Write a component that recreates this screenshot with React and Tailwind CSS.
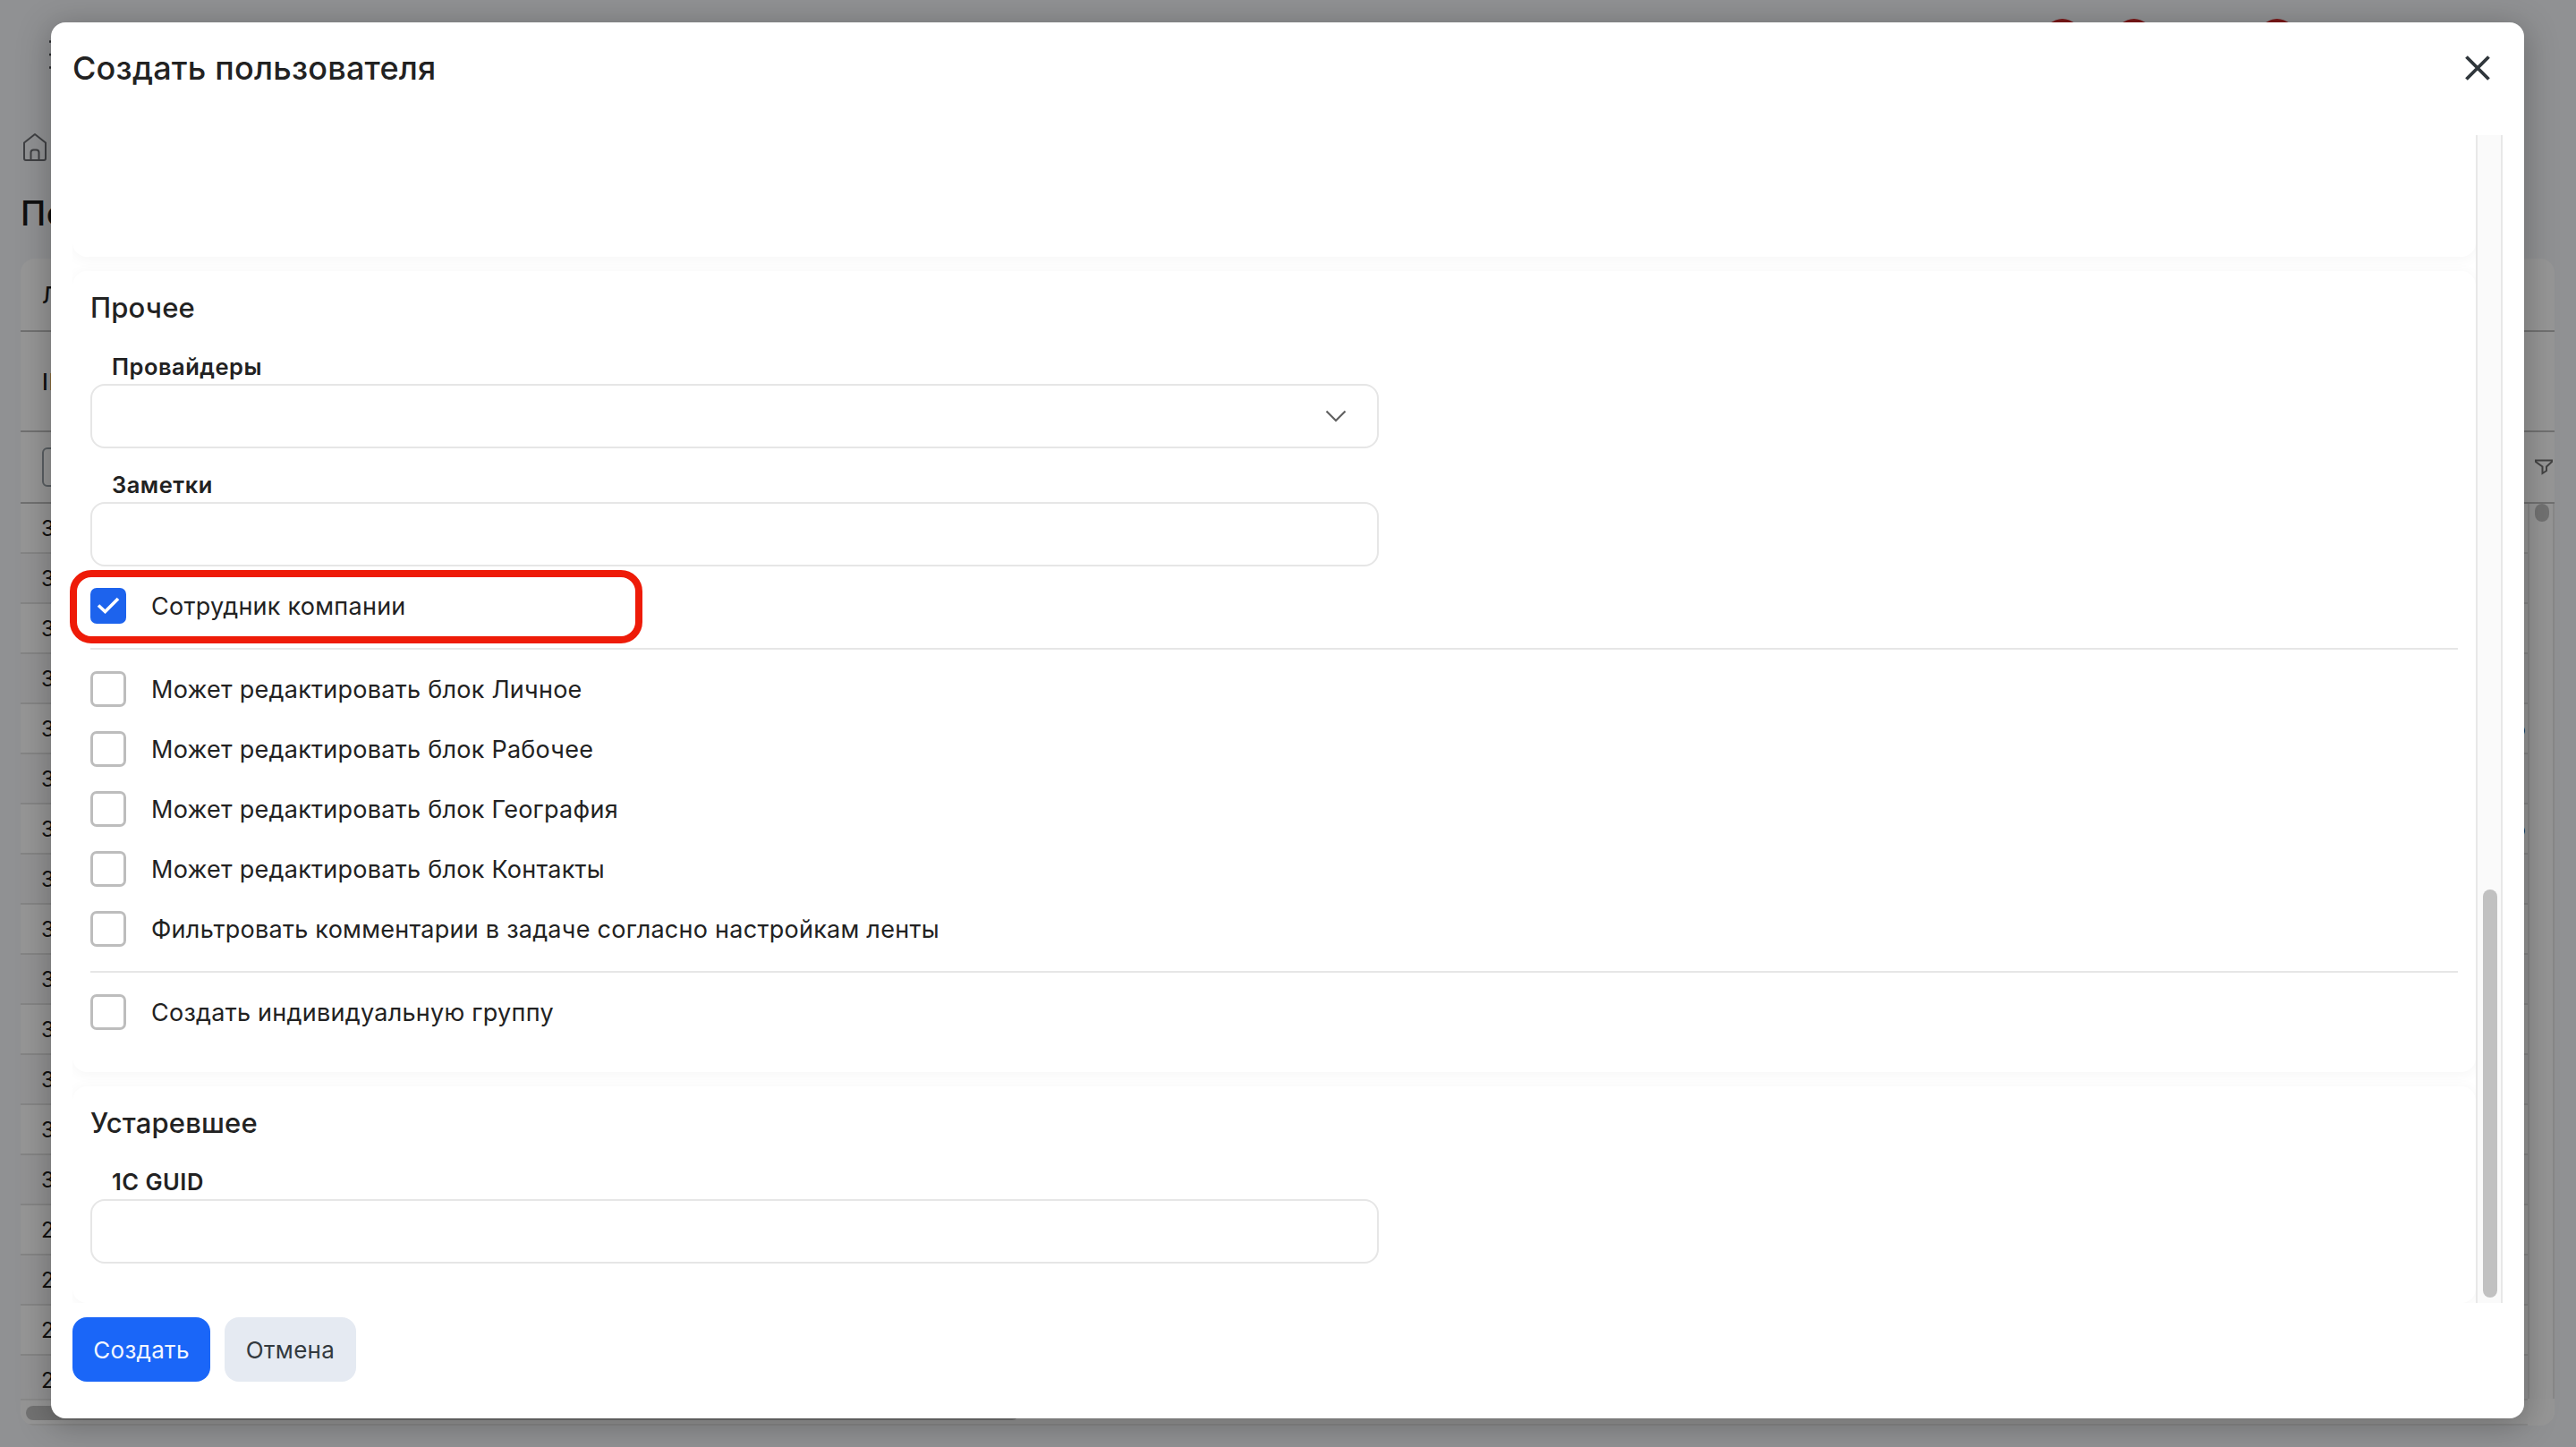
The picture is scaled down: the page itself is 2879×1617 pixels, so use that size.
import React, { useState } from "react";

const TABLE_ROWS = [
  { id: "3" },
  { id: "3" },
  { id: "3" },
  { id: "3" },
  { id: "3", tail: "о" },
  { id: "3" },
  { id: "3", tail: "о" },
  { id: "3" },
  { id: "3" },
  { id: "3" },
  { id: "3" },
  { id: "3" },
  { id: "3" },
  { id: "3" },
  { id: "2" },
  { id: "2" },
  { id: "2" },
  { id: "2" },
];

const PERMISSIONS = [
  { name: "edit_personal", label: "Может редактировать блок Личное" },
  { name: "edit_work", label: "Может редактировать блок Рабочее" },
  { name: "edit_geo", label: "Может редактировать блок География" },
  { name: "edit_contacts", label: "Может редактировать блок Контакты" },
  { name: "filter_comments", label: "Фильтровать комментарии в задаче согласно настройкам ленты" },
];

function UsersPage() {
  return (
    <div className="h-full w-full bg-[#f0f2f5] text-[#1c1c1c]">
      <header className="relative flex h-[121px] items-center pl-[54px]">
        <svg width="36" height="32" viewBox="0 0 36 32" fill="none" stroke="#4a4d52" strokeWidth="2.5">
          <path d="M1 1.5h34M1 16h34M1 30.5h34" />
        </svg>
        {/* notification counters */}
        <span className="absolute left-[2285px] top-[21px] size-10 rounded-full bg-[#cf2929]" />
        <span className="absolute left-[2365px] top-[21px] size-10 rounded-full bg-[#cf2929]" />
        <span className="absolute left-[2525px] top-[21px] size-10 rounded-full bg-[#cf2929]" />
      </header>

      <nav className="pl-[25px] pt-[27px]">
        <svg width="28" height="32" viewBox="0 0 28 32" fill="none" stroke="#6a6b70" strokeWidth="2" strokeLinejoin="round">
          <path d="M2 11.5L14 2l12 9.500V29a2 2 0 0 1-2 2H4a2 2 0 0 1-2-2z" />
          <path d="M9.500 31V22.500a3 3 0 0 1 3-3h3a3 3 0 0 1 3 3V31" />
        </svg>
      </nav>

      <h1 className="mt-9 pl-[23px] text-[38px] font-medium leading-[44px] tracking-[0.5px]">По</h1>

      <div className="ml-[23px] mr-6 mt-[29px] h-[1304px] overflow-hidden rounded-2xl bg-[#fafafa]">
        <div className="flex h-[82px] items-center border-b-2 border-[#bdbdbd] pl-6 pt-1 text-[25px] font-medium">Л</div>
        <div className="flex h-28 items-center border-b-2 border-[#bdbdbd] pl-6 pt-1 text-[25px] font-medium tracking-[1px]">ID</div>
        <div className="flex h-20 items-center justify-between border-b-2 border-[#bdbdbd] pl-6 pr-0.5">
          <div className="h-11 w-40 rounded-md border-2 border-[#949da3]" />
          <svg width="20" height="18" viewBox="0 0 20 18" fill="none" stroke="#707070" strokeWidth="2">
            <path d="M1 1.500h18v1.500l-6 5.500v4.500L8.500 16V8.500L1 3z" />
          </svg>
        </div>

        <div className="flex h-[1000px]">
          <div className="flex-1 overflow-hidden">
            {TABLE_ROWS.map((row, i) => (
              <div
                key={i}
                className="flex h-14 items-center justify-between border-b-2 border-[#dedede] pl-[23px] pr-0.5 pt-0.5 text-2xl odd:bg-[#fafafa] even:bg-[#f3f4f6]"
              >
                <span>{row.id}</span>
                <span>{row.tail}</span>
              </div>
            ))}
          </div>
          <div className="w-[30px] border-x-2 border-[#e3e3e3] bg-[#f8f8f8] pl-1.5">
            <div className="h-5 w-4 rounded-full bg-[#bfbfbf]" />
          </div>
        </div>

        <div className="flex h-[30px]">
          <div className="flex-1 border-y-2 border-[#e5e5e5] bg-[#f8f8f8] pl-1.5 pt-1.5">
            <div className="h-4 w-[1110px] rounded-full bg-[#bfbfbf]" />
          </div>
          <div className="w-[30px] bg-[#fbfbfb]" />
        </div>
      </div>
    </div>
  );
}

function Card({ className, children }) {
  return (
    <section className={`shrink-0 rounded-2xl bg-white px-5 shadow-[0_2px_16px_rgba(0,0,0,0.045)] ${className}`}>
      {children}
    </section>
  );
}

function SectionTitle({ children }) {
  return <h3 className="pt-5 text-[31px] font-medium leading-[42px] tracking-[0.18px]">{children}</h3>;
}

function Field({ label, className, children }) {
  return (
    <div className={className}>
      <div className="mb-1.5 pl-6 text-[25.5px] font-semibold leading-[26px] tracking-[0.5px]">{label}</div>
      <div className="flex h-[72px] w-[1440px] items-center justify-end rounded-2xl border-2 border-[#e6e6e6] bg-white pr-[34px]">
        {children}
      </div>
    </div>
  );
}

function CheckRow({ label, checked, onChange }) {
  return (
    <label className="flex h-10 items-center gap-[27px]">
      <input type="checkbox" className="sr-only" checked={checked} onChange={onChange} />
      {checked ? (
        <span className="flex size-10 items-center justify-center rounded-[7px] bg-[#1d63ed]">
          <svg width="26" height="20" viewBox="0 0 26 20" fill="none" stroke="#fff" strokeWidth="3.600">
            <path d="M2 9.500l7.500 7L24 2" />
          </svg>
        </span>
      ) : (
        <span className="size-10 rounded-[7px] border-3 border-[#bdbdbd] bg-white" />
      )}
      <span className="pl-px pt-0.5 text-[27px] leading-10 tracking-[0.26px]">{label}</span>
    </label>
  );
}

function CreateUserModal() {
  const [values, setValues] = useState({ employee: true });

  const toggle = (name) => setValues({ ...values, [name]: !values[name] });

  return (
    <div className="flex h-[1560px] w-[2764px] flex-col rounded-2xl bg-white pl-6 pr-6 text-[#222222] shadow-[0_6px_36px_2px_rgba(0,0,0,0.26)]">
      <div className="flex h-[126px] items-start justify-between pr-3 pt-[31px]">
        <h2 className="text-4xl font-medium leading-10 tracking-[0.22px]">Создать пользователя</h2>
        <button type="button" className="mt-[5px]">
          <svg width="32" height="30" viewBox="0 0 32 30" fill="none" stroke="#2f363b" strokeWidth="3.800">
            <path d="M3.500 2.500l25 25M28.500 2.500l-25 25" />
          </svg>
        </button>
      </div>

      <div className="relative flex h-[1305px]">
        <div className="flex w-[2686px] flex-col gap-4 overflow-hidden">
          <Card className="h-[136px] rounded-t-none" />

          <Card className="h-[895px]">
            <SectionTitle>Прочее</SectionTitle>
            <Field label="Провайдеры" className="mt-8">
              <svg width="24" height="14" viewBox="0 0 24 14" fill="none" stroke="#616161" strokeWidth="2.200">
                <path d="M1.500 1.500L12 12 22.500 1.500" />
              </svg>
            </Field>
            <Field label="Заметки" className="mt-7" />

            <div className="mt-6">
              <CheckRow label="Сотрудник компании" checked={values.employee} onChange={() => toggle("employee")} />
            </div>

            <div className="mb-6 mt-[27px] h-0.5 bg-[#e6e6e6]" />
            <div className="flex flex-col gap-[27px]">
              {PERMISSIONS.map((p) => (
                <CheckRow key={p.name} label={p.label} checked={!!values[p.name]} onChange={() => toggle(p.name)} />
              ))}
            </div>
            <div className="mb-6 mt-[27px] h-0.5 bg-[#e6e6e6]" />
            <CheckRow label="Создать индивидуальную группу" checked={!!values.group} onChange={() => toggle("group")} />
          </Card>

          <Card className="h-[242px]">
            <SectionTitle>Устаревшее</SectionTitle>
            <Field label="1C GUID" className="mt-8" />
          </Card>
        </div>

        {/* scrollbar */}
        <div className="flex w-[30px] flex-col justify-end border-x-2 border-[#e8e8e8] bg-[#fafafa] pb-1.5 pl-1.5">
          <div className="h-[456px] w-4 rounded-full bg-[#c1c1c1]" />
        </div>

        {/* highlight around the employee checkbox, sticks out of the scroll area */}
        <div className="pointer-events-none absolute -left-[3px] top-[486px] h-[82px] w-[640px] rounded-3xl border-8 border-[#ee1b08]" />
      </div>

      <div className="flex gap-4 pt-4 text-[26px] tracking-[0.3px]">
        <button type="button" className="h-[72px] w-[154px] rounded-2xl bg-[#1a66f8] text-[#f2f6ff]">
          Создать
        </button>
        <button type="button" className="h-[72px] w-[147px] rounded-2xl bg-[#e5eaf2] text-[#333a3f]">
          Отмена
        </button>
      </div>
    </div>
  );
}

function App() {
  return (
    <div className="relative h-[1617px] w-[2879px] overflow-hidden font-['Inter',sans-serif]">
      <UsersPage />
      <div className="absolute inset-0 bg-black/40 pl-[57px] pt-[25px]">
        <CreateUserModal />
      </div>
    </div>
  );
}

export default App;
